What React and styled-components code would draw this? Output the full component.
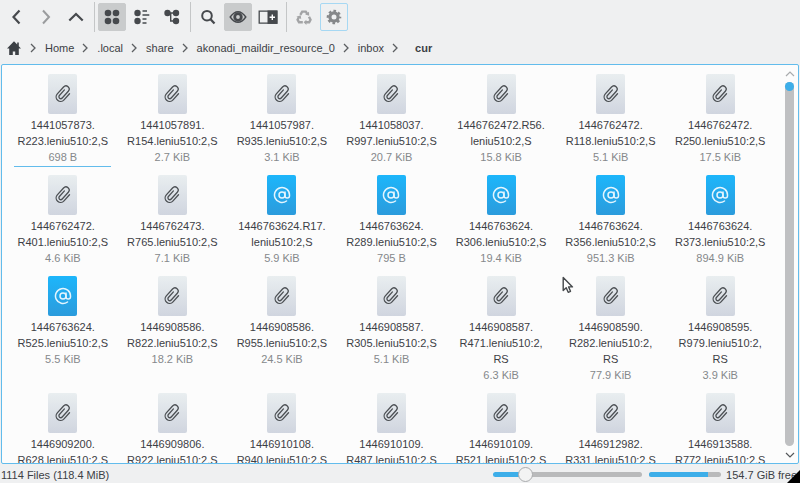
import React, { useState } from "react";
import styled, { createGlobalStyle } from "styled-components";
import { AtSign } from "lucide-react";

const GlobalStyle = createGlobalStyle`
  * {
    box-sizing: border-box;
  }
  body {
    margin: 0;
    background: #eff0f1;
    color: #3c4045;
    font-family: "Liberation Sans", Arial, sans-serif;
    font-size: 11px;
    line-height: 16px;
  }
  button,
  input {
    font: inherit;
    color: inherit;
  }
`;

const Window = styled.div`
  position: relative;
  display: flex;
  flex-direction: column;
  height: 100vh;
  overflow: hidden;
`;

const Toolbar = styled.div`
  display: flex;
  align-items: center;
  gap: 2px;
  flex: none;
  padding: 2px 2px 0;
`;

const ToolButton = styled.button`
  display: flex;
  align-items: center;
  justify-content: center;
  width: 28px;
  height: 28px;
  padding: 0;
  border: 1px solid ${(props) => (props.$outlined ? "#a6d8f3" : props.$active ? "#c9cbcc" : "transparent")};
  border-radius: 2px;
  background: ${(props) => (props.$active ? "#c9cbcc" : "transparent")};
  color: ${(props) => props.$color || "#46494d"};
`;

const Separator = styled.span`
  width: 1px;
  height: 30px;
  margin: 0 1px 0 2px;
  background: #c4c6c7;
`;

const Breadcrumbs = styled.ol`
  display: flex;
  align-items: center;
  flex: none;
  gap: 8px;
  height: 32px;
  margin: 0;
  padding: 0 6px;
  list-style: none;
`;

const Crumb = styled.li`
  display: flex;
  align-items: center;
  gap: 9px;
`;

const CrumbLink = styled.a`
  display: flex;
  color: inherit;
  text-decoration: none;
  font-weight: ${(props) => (props.$current ? "bold" : "normal")};
  padding-left: ${(props) => (props.$current ? "8px" : "0")};
`;

const Panel = styled.main`
  display: flex;
  flex: 1;
  min-height: 0;
  margin: 0 1px;
  overflow: hidden;
  border: 1px solid #62bcec;
  border-radius: 2px;
  background: #fcfcfc;
`;

const FileGrid = styled.ul`
  display: grid;
  grid-template-columns: repeat(7, 1fr);
  align-content: start;
  justify-items: center;
  row-gap: 8px;
  flex: 1;
  margin: 0;
  padding: 9px 6px 0;
  list-style: none;
`;

const FileButton = styled.button`
  display: flex;
  flex-direction: column;
  align-items: center;
  width: 97px;
  padding: 0 0 1px;
  border: 0;
  border-bottom: 1px solid ${(props) => (props.$focused ? "#62bcec" : "transparent")};
  background: none;
  outline: none;
`;

const Sheet = styled.span`
  display: flex;
  align-items: center;
  justify-content: center;
  width: 29px;
  height: 40px;
  margin-bottom: 3px;
  border-radius: 2px;
  color: ${(props) => (props.$mail ? "#e4f5fe" : "#4c5054")};
  background: ${(props) => (props.$mail ? "linear-gradient(#1db6fb, #2b9bdc)" : "linear-gradient(#e9eef0, #d0d5df)")};
`;

const FileName = styled.span`
  white-space: pre-line;
`;

const FileSize = styled.span`
  color: #85888b;
`;

const ScrollBar = styled.div`
  display: flex;
  flex-direction: column;
  align-items: center;
  flex: none;
  width: 17px;
`;

const ScrollButton = styled.button`
  display: flex;
  align-items: center;
  justify-content: center;
  width: 17px;
  height: 17px;
  padding: 0;
  border: 0;
  background: none;
  color: ${(props) => (props.disabled ? "#a9abad" : "#54575a")};
`;

const Track = styled.div`
  flex: 1;
  width: 9px;
  border-radius: 5px;
  background: #bfc0c2;
`;

const Thumb = styled.div`
  width: 9px;
  height: 9px;
  border-radius: 5px;
  background: #3daee9;
`;

const StatusBar = styled.footer`
  display: flex;
  align-items: center;
  flex: none;
  height: 19px;
  padding: 2px 3px 0 1px;
  white-space: nowrap;
`;

const Summary = styled.span`
  flex: 1;
`;

const ZoomSlider = styled.input`
  appearance: none;
  width: 149px;
  height: 15px;
  margin: 0 7px 0 0;
  background: none;

  &::-webkit-slider-runnable-track {
    height: 5px;
    border-radius: 3px;
    background: linear-gradient(to right, #3daee9 ${(props) => props.$fill}%, #b9babb ${(props) => props.$fill}%);
  }
  &::-webkit-slider-thumb {
    appearance: none;
    width: 15px;
    height: 15px;
    margin-top: -5px;
    border: 1px solid #a9abad;
    border-radius: 50%;
    background: #f3f3f3;
  }
`;

const DiskUsage = styled.progress`
  appearance: none;
  width: 72px;
  height: 5px;
  margin-right: 5px;
  border: 0;

  &::-webkit-progress-bar {
    border-radius: 3px;
    overflow: hidden;
    background: #b9babb;
  }
  &::-webkit-progress-value {
    background: #3daee9;
  }
`;

const Corner = styled.span`
  position: absolute;
  right: 0;
  bottom: 0;
  width: 13px;
  height: 13px;
  background: #000;
  clip-path: polygon(100% 0, 100% 100%, 0 100%);
`;

const Pointer = styled.svg`
  position: absolute;
  left: 562px;
  top: 276px;
`;

const Icon = ({ children, size = 20, width = 2 }) => (
  <svg width={size} height={size} viewBox={`0 0 ${size} ${size}`} fill="none" stroke="currentColor" strokeWidth={width} aria-hidden="true">
    {children}
  </svg>
);

const BackIcon = () => <Icon width={2.2}><path d="M13.500 3.500 7.500 10l6 6.500" /></Icon>;
const ForwardIcon = () => <Icon><path d="M7 3.500 13 10l-6 6.500" /></Icon>;
const UpIcon = () => <Icon width={2.2}><path d="M3.300 13.500 10 7l6.700 6.500" /></Icon>;

const IconsViewIcon = () => (
  <Icon>
    <g fill="currentColor" stroke="none">
      <circle cx="6" cy="6" r="3.300" />
      <circle cx="14" cy="6" r="3.300" />
      <circle cx="6" cy="14" r="3.300" />
      <circle cx="14" cy="14" r="3.300" />
    </g>
  </Icon>
);

const CompactViewIcon = () => (
  <Icon>
    <g fill="currentColor" stroke="none">
      <circle cx="5.500" cy="6" r="3.200" />
      <circle cx="5.500" cy="14" r="3.200" />
    </g>
    <path d="M10.500 4h4.500M10.500 8h6.800M10.500 12h4M10.500 16h4" strokeWidth="1.500" />
  </Icon>
);

const TreeViewIcon = () => (
  <Icon>
    <path d="M5 6h9M8.700 6v8H14" strokeWidth="1.400" />
    <g fill="currentColor" stroke="none">
      <circle cx="5.500" cy="6" r="3.200" />
      <circle cx="14" cy="6" r="3.200" />
      <circle cx="14" cy="14" r="3.200" />
    </g>
  </Icon>
);

const SearchIcon = () => (
  <Icon>
    <circle cx="9" cy="8.700" r="4.800" />
    <path d="m12.300 12 4.200 4.500" strokeWidth="2.300" />
  </Icon>
);

const PreviewIcon = () => (
  <Icon>
    <path d="M2.200 10C5 6 7.500 4.700 10 4.700s5 1.300 7.800 5.300c-2.800 4-5.300 5.300-7.800 5.300S5 14 2.200 10Z" strokeWidth="1.400" />
    <circle cx="10" cy="10" r="3.300" strokeWidth="2.800" />
  </Icon>
);

const SplitIcon = () => (
  <Icon>
    <path d="M1.200 4.200h17.600v12H1.200z" strokeWidth="1.300" />
    <path d="M9.500 3.500H19.500v13.400H9.500z" fill="currentColor" stroke="none" />
    <path d="M14.300 7.500v5.400M11.600 10.200h5.400" stroke="#fff" strokeWidth="1.400" />
  </Icon>
);

const RecycleIcon = () => (
  <Icon>
    <g strokeWidth="2.400">
      <path d="M6.300 7.800 8.200 4.600h3.600l1.400 2.200" />
      <path d="m15 9.800 1.500 3-1.300 2.400h-3.400" />
      <path d="M8.800 15.200H5l-1.400-2.400L5 10" />
    </g>
    <g fill="currentColor" stroke="none">
      <path d="m15 4.800.2 4-4-1.200zM12.400 12.700v5.200l-2.800-2.700zM2.400 9.800l4.300-1.600.5 3.800z" />
    </g>
  </Icon>
);

const GearIcon = () => (
  <Icon>
    <circle cx="10" cy="10" r="4.100" strokeWidth="3.200" />
    <circle cx="10" cy="10" r="6.200" strokeWidth="2.200" strokeDasharray="2.600 2.270" strokeDashoffset="1.300" />
  </Icon>
);

const HomeIcon = () => (
  <svg width="16" height="16" viewBox="0 0 16 16" fill="currentColor" aria-hidden="true">
    <path d="M8 1.200 1 8.500h2.200V15h3.600v-3.500h2.400V15h3.600V8.500H15l-2.200-2.300V2.500h-1.600v2z" />
  </svg>
);

const CrumbArrow = () => (
  <svg width="6" height="10" viewBox="0 0 6 10" fill="none" stroke="#5b5e61" strokeWidth="1.300" aria-hidden="true">
    <path d="m1 1 4 4-4 4" />
  </svg>
);

const ClipIcon = () => (
  <svg width="20" height="20" viewBox="0 0 20 20" fill="none" stroke="currentColor" strokeWidth="1.300" strokeLinecap="round" aria-hidden="true">
    <path
      transform="rotate(42 10 10)"
      d="M8.300 6v7.500a1.900 1.900 0 0 0 3.800 0V4.400a3.200 3.200 0 0 0-6.400 0v9.300a4.500 4.500 0 0 0 9 0V5.500"
    />
  </svg>
);

const FILES = [
  ["1441057873.\nR223.leniu510:2,S", "698 B"],
  ["1441057891.\nR154.leniu510:2,S", "2.7 KiB"],
  ["1441057987.\nR935.leniu510:2,S", "3.1 KiB"],
  ["1441058037.\nR997.leniu510:2,S", "20.7 KiB"],
  ["1446762472.R56.\nleniu510:2,S", "15.8 KiB"],
  ["1446762472.\nR118.leniu510:2,S", "5.1 KiB"],
  ["1446762472.\nR250.leniu510:2,S", "17.5 KiB"],
  ["1446762472.\nR401.leniu510:2,S", "4.6 KiB"],
  ["1446762473.\nR765.leniu510:2,S", "7.1 KiB"],
  ["1446763624.R17.\nleniu510:2,S", "5.9 KiB", true],
  ["1446763624.\nR289.leniu510:2,S", "795 B", true],
  ["1446763624.\nR306.leniu510:2,S", "19.4 KiB", true],
  ["1446763624.\nR356.leniu510:2,S", "951.3 KiB", true],
  ["1446763624.\nR373.leniu510:2,S", "894.9 KiB", true],
  ["1446763624.\nR525.leniu510:2,S", "5.5 KiB", true],
  ["1446908586.\nR822.leniu510:2,S", "18.2 KiB"],
  ["1446908586.\nR955.leniu510:2,S", "24.5 KiB"],
  ["1446908587.\nR305.leniu510:2,S", "5.1 KiB"],
  ["1446908587.\nR471.leniu510:2,\nRS", "6.3 KiB"],
  ["1446908590.\nR282.leniu510:2,\nRS", "77.9 KiB"],
  ["1446908595.\nR979.leniu510:2,\nRS", "3.9 KiB"],
  ["1446909200.\nR628.leniu510:2,S", ""],
  ["1446909806.\nR922.leniu510:2,S", ""],
  ["1446910108.\nR940.leniu510:2,S", ""],
  ["1446910109.\nR487.leniu510:2,S", ""],
  ["1446910109.\nR521.leniu510:2,S", ""],
  ["1446912982.\nR331.leniu510:2,S", ""],
  ["1446913588.\nR772.leniu510:2,S", ""],
];

const PATH = ["Home", ".local", "share", "akonadi_maildir_resource_0", "inbox", "cur"];

const ZOOM_MAX = 16;

const File = ({ name, size, mail, focused, onClick }) => (
  <li>
    <FileButton type="button" $focused={focused} onClick={onClick}>
      <Sheet $mail={mail}>{mail ? <AtSign size={18} strokeWidth={2} /> : <ClipIcon />}</Sheet>
      <FileName>{name}</FileName>
      <FileSize>{size}</FileSize>
    </FileButton>
  </li>
);

const App = () => {
  const [focused, setFocused] = useState(0);
  const [zoom, setZoom] = useState(3);

  return (
    <>
      <GlobalStyle />
      <Window>
        <Toolbar role="toolbar" aria-label="Main toolbar">
          <ToolButton aria-label="Back"><BackIcon /></ToolButton>
          <ToolButton aria-label="Forward" $color="#9a9c9e"><ForwardIcon /></ToolButton>
          <ToolButton aria-label="Up"><UpIcon /></ToolButton>
          <Separator />
          <ToolButton aria-label="Icons" $active><IconsViewIcon /></ToolButton>
          <ToolButton aria-label="Compact"><CompactViewIcon /></ToolButton>
          <ToolButton aria-label="Details"><TreeViewIcon /></ToolButton>
          <Separator />
          <ToolButton aria-label="Find"><SearchIcon /></ToolButton>
          <ToolButton aria-label="Preview" $active><PreviewIcon /></ToolButton>
          <ToolButton aria-label="Split"><SplitIcon /></ToolButton>
          <Separator />
          <ToolButton aria-label="Trash" $color="#a3a4a6"><RecycleIcon /></ToolButton>
          <ToolButton aria-label="Settings" $color="#858789" $outlined><GearIcon /></ToolButton>
        </Toolbar>

        <Breadcrumbs aria-label="Location">
          <Crumb>
            <CrumbLink href="#root" aria-label="Root"><HomeIcon /></CrumbLink>
          </Crumb>
          {PATH.map((name, i) => (
            <Crumb key={name}>
              <CrumbArrow />
              <CrumbLink href={`#${name}`} $current={i === PATH.length - 1}>{name}</CrumbLink>
            </Crumb>
          ))}
        </Breadcrumbs>

        <Panel>
          <FileGrid>
            {FILES.map(([name, size, mail], i) => (
              <File key={name} name={name} size={size} mail={mail} focused={i === focused} onClick={() => setFocused(i)} />
            ))}
          </FileGrid>
          <ScrollBar>
            <ScrollButton aria-label="Scroll up" disabled>
              <Icon size={10} width={1.2}><path d="M1 7l4-4 4 4" /></Icon>
            </ScrollButton>
            <Track>
              <Thumb />
            </Track>
            <ScrollButton aria-label="Scroll down">
              <Icon size={10} width={1.2}><path d="M1 3l4 4 4-4" /></Icon>
            </ScrollButton>
          </ScrollBar>
        </Panel>

        <StatusBar>
          <Summary>1114 Files (118.4 MiB)</Summary>
          <ZoomSlider
            type="range"
            aria-label="Icon size"
            min="0"
            max={ZOOM_MAX}
            value={zoom}
            $fill={(zoom / ZOOM_MAX) * 90 + 5}
            onChange={(e) => setZoom(Number(e.target.value))}
          />
          <DiskUsage aria-label="Disk usage" max="100" value="82" />
          <span>154.7 GiB free</span>
        </StatusBar>
        <Corner />
        <Pointer width="12" height="18" viewBox="0 0 12 18" fill="#fff" stroke="#45484b" strokeWidth="1.400" strokeLinejoin="round" aria-hidden="true">
          <path d="M1.200 1.500v13l3-2.700 2 4.500 2.300-1-1.900-4.400h3.900z" />
        </Pointer>
      </Window>
    </>
  );
};

export default App;
